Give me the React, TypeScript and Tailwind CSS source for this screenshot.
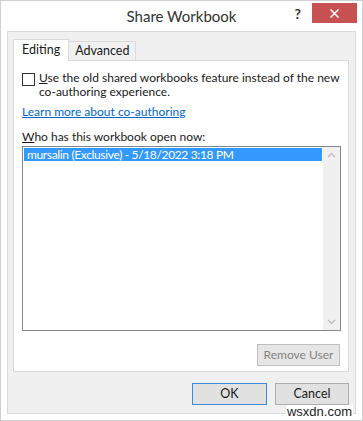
import React from "react";

const font = "font-['Lato','Noto_Sans',sans-serif]";

const Chevron: React.FC<{ up?: boolean }> = ({ up }) => (
  <svg width="9" height="6" viewBox="0 0 9 6" aria-hidden="true">
    <path
      d={up ? "M1 5 L4.5 1.5 L8 5" : "M1 1 L4.5 4.5 L8 1"}
      fill="none"
      stroke="#bdbdbd"
      strokeWidth="1.4"
    />
  </svg>
);

const App: React.FC = () => {
  return (
    <div className={`relative box-border flex flex-col w-[363px] h-[421px] bg-white border border-[#cfcfcf] text-[#1a1a1a] ${font}`}>
      {/* title bar */}
      <div className="grid grid-cols-[1fr_auto_1fr] items-start h-[30px]">
        <div />
        <div className="pt-[5px] text-[15px] leading-[20px] text-[#333]">Share Workbook</div>
        <div className="flex justify-end items-start pt-[2px] pr-[5px]">
          <span className="mt-[4px] mr-[11px] text-[14px] leading-[14px] font-bold text-[#333]">?</span>
          <button className="flex justify-center items-center w-[45px] h-[20px] bg-[#c75050]" aria-label="Close">
            <svg width="9" height="9" viewBox="0 0 9 9" aria-hidden="true">
              <path d="M0.5 0.5 L8.5 8.5 M8.5 0.5 L0.5 8.5" stroke="#fff" strokeWidth="1.5" />
            </svg>
          </button>
        </div>
      </div>

      {/* dialog body */}
      <div className="box-border flex flex-col mx-[6px] h-[383px] pt-[7px] pl-[5px] pr-[6px] bg-[#f0f0f0] border border-[#dadada]">
        {/* tabs */}
        <div className="flex items-end text-[12.5px]">
          <div className="relative z-10 box-border flex items-center h-[22px] -mb-px px-[8px] bg-white border border-b-0 border-[#d9d9d9]">
            Editing
          </div>
          <div className="box-border flex items-center h-[19px] px-[6px] bg-[#f0f0f0] border border-l-0 border-b-0 border-[#d9d9d9]">
            Advanced
          </div>
        </div>

        {/* tab panel */}
        <div className="box-border flex flex-col h-[312px] pt-[10px] pl-[8px] pr-[7px] bg-white border border-[#d9d9d9] text-[12px]">
          <label className="flex items-start gap-[4px]">
            <span className="box-border shrink-0 mt-[2px] w-[13px] h-[13px] bg-white border border-[#333]" />
            <span className="leading-[14px] whitespace-nowrap">
              <span className="underline">U</span>se the old shared workbooks feature instead of the new
              <br />
              co-authoring experience.
            </span>
          </label>

          <a className="mt-[6px] leading-[14px] text-[#0066cc] underline">Learn more about co-authoring</a>

          <div className="mt-[11px] leading-[14px]">
            <span className="underline">W</span>ho has this workbook open now:
          </div>

          <div className="box-border flex mt-[2px] h-[185px] bg-white border border-[#828790]">
            <div className="flex-1 p-px pr-[1px]">
              <div className="h-[13px] pl-[3px] bg-[#3399ff] text-white leading-[13px] tracking-[-0.35px]">
                mursalin (Exclusive) - 5/18/2022 3:18 PM
              </div>
            </div>
            <div className="flex flex-col justify-between items-center w-[17px] py-[5px] bg-[#f0f0f0]">
              <Chevron up />
              <Chevron />
            </div>
          </div>

          <div className="flex justify-end mt-[13px] pr-[1px]">
            <button
              disabled
              className="box-border w-[83px] h-[22px] bg-[#e6e6e6] border border-[#bfbfbf] text-[#838383] leading-[20px]"
            >
              Remove User
            </button>
          </div>
        </div>

        {/* footer buttons */}
        <div className="flex justify-end gap-[8px] mt-[11px] text-[12.5px]">
          <button className="box-border w-[75px] h-[22px] bg-[#e1e1e1] border border-[#3c8ad8]">OK</button>
          <button className="box-border w-[74px] h-[22px] bg-[#e1e1e1] border border-[#adadad]">Cancel</button>
        </div>
      </div>

      <span className="absolute right-[9px] bottom-[1px] px-[1px] bg-white text-[13px] leading-[14px] text-[#222] font-['Liberation_Sans',sans-serif]">
        wsxdn.com
      </span>
    </div>
  );
};

export default App;
